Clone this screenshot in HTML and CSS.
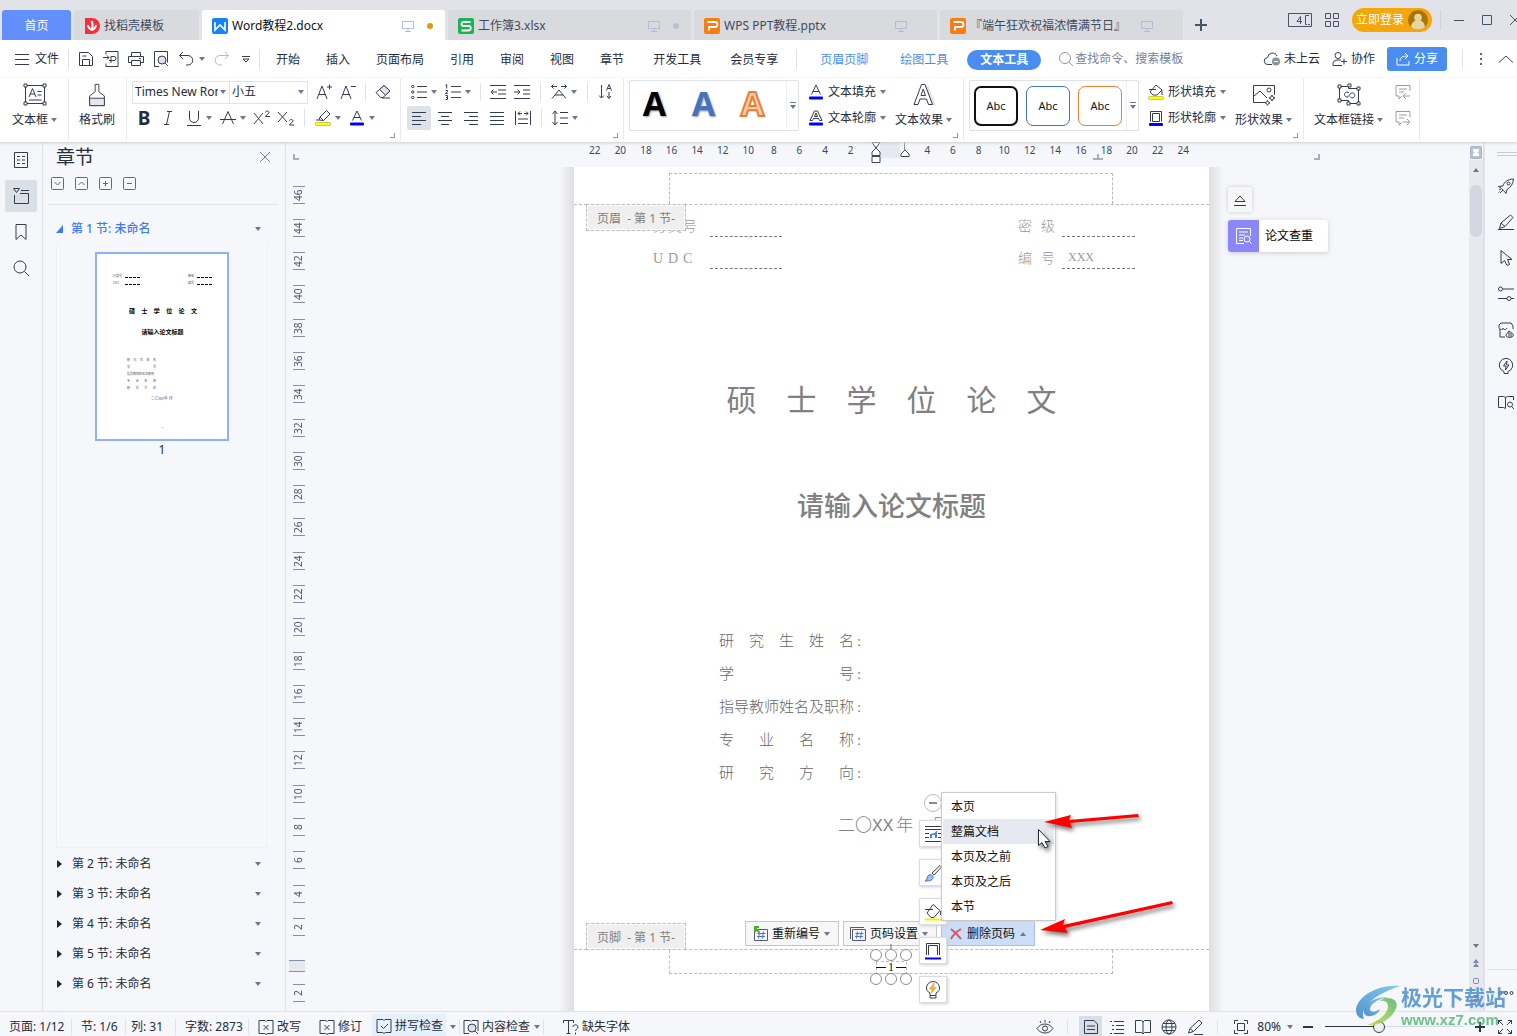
FILE: index.html
```html
<!DOCTYPE html>
<html lang="zh-CN">
<head>
<meta charset="utf-8">
<title>Word教程2.docx</title>
<link rel="stylesheet" href="styles.css">
</head>
<body>
<svg class="defs" aria-hidden="true">
  <defs>
    <symbol id="caret" viewBox="0 0 6 4"><path d="M0 0h6L3 4z" fill="#6b7890"/></symbol>
    <symbol id="screen" viewBox="0 0 12 12"><path d="M.5 1.500h11v7H.5zM6 9v2.500M3 11.500h6" fill="none" stroke="#b3bdd6"/></symbol>
    <symbol id="ppt" viewBox="0 0 16 16"><rect width="16" height="16" rx="2" fill="#f97c10"/><path d="M3.500 4h7.500a2 2 0 0 1 0 5H5v3.500" fill="none" stroke="#fff" stroke-width="1.800"/></symbol>
    <symbol id="save" viewBox="0 0 16 16"><path d="M1.500 1.500h9l4 4v9h-13zM4.500 14V8.500h7V14M4.500 5h4"/></symbol>
    <symbol id="export" viewBox="0 0 16 16"><path d="M3 3.500v-3h12v15H3v-3M0 6.500h6M4 4.500l2 2-2 2M8 12V5.500h3a2 2 0 0 1 0 4H6"/></symbol>
    <symbol id="print" viewBox="0 0 16 16"><path d="M3.500 5V1.500h9V5M3.500 11.500h-3v-6h15v6h-3M3.500 9.500h9v5h-9zM11 7.500h2"/></symbol>
    <symbol id="preview" viewBox="0 0 16 16"><path d="M6 15.500H1.500V.5h13v11M12 12l3 3"/><circle cx="9" cy="9" r="4" fill="#dde1e8"/></symbol>
    <symbol id="undo" viewBox="0 0 16 16"><path d="M5 1L1.500 4.500 5 8M2 4.500h8a4.500 4.500 0 0 1 0 9.500H8"/></symbol>
    <symbol id="textbox" viewBox="0 0 24 24"><path d="M2.500 2.500h19v18h-19zM6 14l3.500-8.500L13 14M7.200 11h4.800M14.500 8.500h4M14.500 12h4M6 17h12.500"/><path d="M1 1h3v3H1zM20 1h3v3h-3zM1 19h3v3H1zM20 19h3v3h-3z" fill="#fff"/></symbol>
    <symbol id="brush" viewBox="0 0 20 26"><path d="M8 1.500h4v8l6 4.500v10.500H2V14l6-4.500z"/><path d="M2 16.500h16v8H2z" fill="#e4e7ec"/></symbol>
    <symbol id="eraser" viewBox="0 0 16 16"><path d="M1 8.500L9 1.500l6 5.500-7 6.500H5.500zM7 14h8"/><path d="M9 1.500l6 5.500-4.500 4-6-5.500z" fill="#dfe3ea"/></symbol>
    <symbol id="bullets" viewBox="0 0 16 16"><path d="M6 2.500h10M6 8h10M6 13.500h10"/><circle cx="1.800" cy="2.500" r="1.200"/><circle cx="1.800" cy="8" r="1.200"/><circle cx="1.800" cy="13.500" r="1.200"/></symbol>
    <symbol id="numbers" viewBox="0 0 16 16"><path d="M6 2.500h10M6 8h10M6 13.500h10M.5 1.500l1.200-1V4.500M.5 6.500h2v1.300l-2 1.700h2.200M.5 11.500h2v4h-2M1 13.500h1.500"/></symbol>
    <symbol id="outdent" viewBox="0 0 16 16"><path d="M0 1.500h16M8 6h8M8 10h8M0 14.500h16M1 8h6M3.500 5.500L1 8l2.500 2.500"/></symbol>
    <symbol id="indent" viewBox="0 0 16 16"><path d="M0 1.500h16M9 6h7M9 10h7M0 14.500h16M0 8h6M3.500 5.500L6 8l-2.500 2.500"/></symbol>
    <symbol id="charscale" viewBox="0 0 16 16"><path d="M1 14.500L8 6l7 8.500M4 11h8M0 2.500h6M10 2.500h6M2.500.5l-2 2 2 2M13.500.5l2 2-2 2"/></symbol>
    <symbol id="sort" viewBox="0 0 16 16"><path d="M3.500 1v13M1 11.500l2.500 2.500L6 11.500M8.500 6.500l2.500-6 2.500 6M9.500 4.500h3M11 8v6M9 12l2 2.500 2-2.500"/></symbol>
    <symbol id="al" viewBox="0 0 14 14"><path d="M0 1.500h14M0 5.500h9M0 9.500h14M0 13.500h9"/></symbol>
    <symbol id="ac" viewBox="0 0 14 14"><path d="M0 1.500h14M3 5.500h8M0 9.500h14M3 13.500h8"/></symbol>
    <symbol id="ar" viewBox="0 0 14 14"><path d="M0 1.500h14M5 5.500h9M0 9.500h14M5 13.500h9"/></symbol>
    <symbol id="aj" viewBox="0 0 14 14"><path d="M0 1.500h14M0 5.500h14M0 9.500h14M0 13.500h14"/></symbol>
    <symbol id="ad" viewBox="0 0 16 16"><path d="M.5 1v14M15.500 1v14M3 3.500h4M9 3.500h4M5 1.500l-2 2 2 2M11 1.500l2 2-2 2M3 9h10M3 13.500h10"/></symbol>
    <symbol id="spacing" viewBox="0 0 16 16"><path d="M3 1v14M.5 4L3 1l2.500 3M.5 12L3 15l2.500-3M8 2.500h8M8 8h8M8 13.500h8"/></symbol>
    <symbol id="fillA" viewBox="0 0 14 16"><path d="M2.500 10.500L7 1l4.500 9.500M4 7.500h6"/><rect x="0" y="12.500" width="14" height="3" rx="1" fill="#00f" stroke="none"/></symbol>
    <symbol id="lineA" viewBox="0 0 14 16"><path d="M1 10.500L5.500 1h3L13 10.500h-2.500L9.500 8.500h-5l-1 2zM5.500 6.500h3L7 3z"/><rect x="0" y="12.500" width="14" height="3" rx="1" fill="#00f" stroke="none"/></symbol>
    <symbol id="bigA" viewBox="0 0 24 24"><path d="M15 3l7 18h-4" stroke="#e0e2e6" stroke-width="2.500"/><path d="M2 21.500L9.500 1.500h3.500l7.500 20h-4l-2-5.500H8l-2 5.500zM9 12.500h4.500L11.200 6z" fill="#fff"/></symbol>
    <symbol id="bucket" viewBox="0 0 16 16"><path d="M8 1l6 5-5 5H5L2 8zM1 5.500h7M14 6.500V11" fill="#fff"/><rect x=".5" y="12.500" width="15" height="3" rx="1" fill="#ff0" stroke="#a9a92c" stroke-width=".6"/></symbol>
    <symbol id="frame" viewBox="0 0 16 16"><path d="M2.500 11.500V1.500h11v10M4.500 11.500v-8h7v8z"/><rect x="1" y="13" width="14" height="3" rx="1" fill="#00f" stroke="none"/></symbol>
    <symbol id="effect" viewBox="0 0 24 24"><path d="M13 19.500H1.500v-17h21V12M2 13l6-5 7 7"/><circle cx="17" cy="7" r="2"/><path d="M20 12l1 2 2 1-2 1-1 2-1-2-2-1 2-1zM15.500 17.500l.8 1.500 1.700.8-1.700.9-.8 1.500-.8-1.500-1.700-.9 1.700-.8z"/></symbol>
    <symbol id="link" viewBox="0 0 24 24"><path d="M2.500 3.500h10v-1h-1v3h10v15h-10v-3h-9zM12 10l-1-.8a2.500 2.500 0 1 0 0 4.600l2-2.600a2.500 2.500 0 1 1 0 2.300"/><path d="M1 2h3v3H1zM11 1h3v3h-3zM20 4h3v3h-3zM1 16h3v3H1zM10 19h3v3h-3zM20 19h3v3h-3z" fill="#fff"/></symbol>
    <symbol id="note" viewBox="0 0 16 16"><path d="M15 7V1.500H1V12h3v3l3-3M4 5h8M4 8h5M8 12h7M11 9l-3 3 3 3"/></symbol>
    <symbol id="bookx" viewBox="0 0 16 16"><path d="M8 2.500l-1-1H1v13h5.500l1.500 1 1.500-1H15v-13H9zM5.500 6l5 5M10.500 6l-5 5"/></symbol>
    <symbol id="bookv" viewBox="0 0 16 16"><path d="M8 2.500l-1-1H1v13h5.500l1.500 1 1.500-1H15v-13H9zM5 8l2.500 2.500L12 6"/></symbol>
    <symbol id="hash" viewBox="0 0 14 14"><path d="M.5 2.500h13v11H.5z" stroke="#555b68"/><path d="M5.500 4.500l-1 7M9.500 4.500l-1 7M3.500 6.500h8M3 9.500h8" stroke="#3f78e0"/></symbol>
  </defs>
</svg>

<header class="titlebar">
  <nav class="tabs">
    <a class="tab home" href="#">首页</a>
    <a class="tab store" href="#"><svg class="i16" viewBox="0 0 16 16"><path d="M1 0h7a8 8 0 0 1 0 16H1z" fill="#f5303c"/><path d="M7.500 3c2 3 1 6 .5 9M4 7c0 3 2 4 4 5M12 7c0 3-2 4-4 5" stroke="#fff" stroke-width="2" fill="none"/></svg>找稻壳模板</a>
    <a class="tab active" href="#"><svg class="i16" viewBox="0 0 16 16"><rect width="16" height="16" rx="2" fill="#1483f7"/><path d="M3 4v8l5-5 5 5V4" fill="none" stroke="#fff" stroke-width="1.600"/></svg><span>Word教程2.docx</span><svg class="i12"><use href="#screen"/></svg><i class="dot"></i></a>
    <a class="tab" href="#"><svg class="i16" viewBox="0 0 16 16"><rect width="16" height="16" rx="2" fill="#1bb455"/><path d="M12.500 4H5.500a2 2 0 0 0 0 4h5a2 2 0 0 1 0 4.500h-7" fill="none" stroke="#fff" stroke-width="1.800"/></svg><span>工作簿3.xlsx</span><svg class="i12"><use href="#screen"/></svg><i class="dot pale"></i></a>
    <a class="tab" href="#"><svg class="i16"><use href="#ppt"/></svg><span>WPS PPT教程.pptx</span><svg class="i12 last"><use href="#screen"/></svg></a>
    <a class="tab" href="#"><svg class="i16"><use href="#ppt"/></svg><span>『端午狂欢祝福浓情满节日』</span><svg class="i12 last"><use href="#screen"/></svg></a>
    <button class="plus" aria-label="新建"><svg class="i12" viewBox="0 0 12 12"><path d="M6 0v12M0 6h12" stroke="#46536b" stroke-width="2"/></svg></button>
  </nav>
  <div class="win">
    <button aria-label="窗口"><svg width="24" height="14" viewBox="0 0 24 14" class="ln"><path d="M.5.500h23v13H.5zM21 2.500h-3.500v9H19M20 11.500h2M12.500 11V3.500L9 8.500h5"/></svg></button>
    <button aria-label="应用"><svg width="14" height="14" viewBox="0 0 14 14" class="ln"><path d="M.5.500h5v5h-5zM8.500.500h5v5h-5zM.5 8.500h5v5h-5zM8.500 8.500h5v5h-5z"/></svg></button>
    <button class="login">立即登录<svg width="20" height="20" viewBox="0 0 20 20"><circle cx="10" cy="10" r="10" fill="#a87408"/><circle cx="10" cy="7.500" r="3.800" fill="#e8d3a4"/><path d="M3 17a7 7 0 0 1 14 0 10 10 0 0 1-14 0z" fill="#e8d3a4"/></svg></button>
    <i class="vsep"></i>
    <button aria-label="最小化"><svg width="10" height="10" viewBox="0 0 10 10" class="ln"><path d="M0 5.500h10"/></svg></button>
    <button aria-label="最大化"><svg width="10" height="10" viewBox="0 0 10 10" class="ln"><path d="M.5.500h9v9h-9z"/></svg></button>
    <button aria-label="关闭"><svg width="10" height="10" viewBox="0 0 10 10" class="ln"><path d="M0 0l10 10M10 0L0 10"/></svg></button>
  </div>
</header>

<div class="menubar">
  <button class="file"><svg width="14" height="12" viewBox="0 0 14 12" class="ln"><path d="M0 1.500h14M0 6.500h14M0 11.500h14"/></svg>文件</button>
  <i class="vsep"></i>
  <div class="quick">
    <button aria-label="保存"><svg class="i16 ln"><use href="#save"/></svg></button>
    <button aria-label="输出为PDF"><svg class="i16 ln"><use href="#export"/></svg></button>
    <button aria-label="打印"><svg class="i16 ln"><use href="#print"/></svg></button>
    <button aria-label="打印预览"><svg class="i16 ln"><use href="#preview"/></svg></button>
    <button aria-label="撤销"><svg class="i16 ln"><use href="#undo"/></svg><svg class="caret"><use href="#caret"/></svg></button>
    <button aria-label="恢复" class="redo"><svg class="i16 ln"><use href="#undo"/></svg></button>
    <button aria-label="自定义"><svg width="8" height="8" viewBox="0 0 8 8" class="ln"><path d="M0 1.500h8M1 4l3 3 3-3z"/></svg></button>
  </div>
  <i class="vsep"></i>
  <nav class="menus">
    <a href="#">开始</a><a href="#">插入</a><a href="#">页面布局</a><a href="#">引用</a><a href="#">审阅</a><a href="#">视图</a><a href="#">章节</a><a href="#" class="far">开发工具</a><a href="#" class="far">会员专享</a>
  </nav>
  <i class="vsep"></i>
  <nav class="menus ctx">
    <a href="#">页眉页脚</a><a href="#">绘图工具</a><a href="#" class="pill">文本工具</a>
  </nav>
  <label class="search"><svg width="14" height="14" viewBox="0 0 14 14"><circle cx="6" cy="6" r="5.500"/><path d="M10 10l4 4"/></svg><input type="text" placeholder="查找命令、搜索模板" aria-label="查找命令"></label>
  <div class="cloud">
    <button><svg class="i16 ln" viewBox="0 0 16 16"><path d="M8 13.500H4a3.500 3.500 0 0 1-.5-7A5 5 0 0 1 13 5"/><circle cx="12" cy="10.500" r="4" fill="#8b93a3" stroke="none"/><path d="M10 10.500h4" stroke="#fff"/></svg>未上云</button>
    <button><svg width="15" height="14" viewBox="0 0 15 14" class="ln"><circle cx="6" cy="3.500" r="3"/><path d="M10 13.500H1V11a4 4 0 0 1 4-3h4M9 9.500h6M12 6.500v6"/></svg>协作</button>
    <button class="share"><svg width="14" height="14" viewBox="0 0 14 14"><path d="M1 6v7h12V9M4 9c0-4 3-5 8-5M9 1l3 3-3 3"/></svg>分享</button>
    <i class="vsep"></i>
    <button aria-label="更多"><svg width="4" height="14" viewBox="0 0 4 14"><path d="M1 1h2v2H1zM1 6h2v2H1zM1 11h2v2H1z" fill="#5b6679"/></svg></button>
    <button aria-label="收起功能区"><svg width="14" height="8" viewBox="0 0 14 8" class="ln"><path d="M0 7.500L7 1l7 6.500"/></svg></button>
  </div>
</div>

<div class="ribbon">
  <section class="grp g-box">
    <button class="big"><svg class="i24 ln"><use href="#textbox"/></svg><span>文本框<svg class="caret"><use href="#caret"/></svg></span></button>
  </section>
  <section class="grp g-brush">
    <button class="big"><svg width="20" height="26" class="ln"><use href="#brush"/></svg><span>格式刷</span></button>
  </section>
  <section class="grp rows">
    <div class="row">
      <span class="combo face"><select aria-label="字体"><option>Times New Roman</option></select><svg class="caret"><use href="#caret"/></svg></span>
      <span class="combo size"><select aria-label="字号"><option>小五</option></select><svg class="caret"><use href="#caret"/></svg></span>
      <button class="tb first" aria-label="增大字号"><svg class="i16 ln" viewBox="0 0 16 16"><path d="M1 15L6 2l5 13M3 10.500h6.500M11 3h5M13.500.500v5"/></svg></button>
      <button class="tb" aria-label="减小字号"><svg class="i16 ln" viewBox="0 0 16 16"><path d="M1 15L6 2l5 13M3 10.500h6.500M11 2.500h5"/></svg></button>
      <i class="sep"></i>
      <button class="tb" aria-label="清除格式"><svg class="i16 ln"><use href="#eraser"/></svg></button>
    </div>
    <div class="row format">
      <button class="tb bold" aria-label="加粗">B</button>
      <button class="tb italic" aria-label="倾斜"><svg class="i16 ln" viewBox="0 0 16 16"><path d="M7 1.500h5M4 14.500h5M9.500 1.500l-3 13"/></svg></button>
      <button class="tb c" aria-label="下划线"><svg class="i16 ln" viewBox="0 0 16 16"><path d="M3.500 1v7a4.500 4.500 0 0 0 9 0V1M1 15.500h14"/></svg><svg class="caret"><use href="#caret"/></svg></button>
      <button class="tb c" aria-label="删除线"><svg class="i16 ln" viewBox="0 0 16 16"><path d="M2.500 14L8 1.500 13.500 14M0 9.500h16"/></svg><svg class="caret"><use href="#caret"/></svg></button>
      <button class="tb" aria-label="上标"><svg class="i16 ln" viewBox="0 0 16 16"><path d="M0 3l9 11M9 3L0 14M11.500 2.500c0-2 3.500-2 3.500 0 0 1.500-3.500 2.500-3.500 4H16"/></svg></button>
      <button class="tb" aria-label="下标"><svg class="i16 ln" viewBox="0 0 16 16"><path d="M0 2l9 10M9 2L0 12M11.500 11c0-2 3.500-2 3.500 0 0 1.500-3.500 2.500-3.500 4H16"/></svg></button>
      <i class="sep"></i>
      <button class="tb c" aria-label="突出显示"><svg class="i16 ln" viewBox="0 0 16 16"><path d="M4 10l1-3 6.500-6.500L15 4 8.500 10.500zM5 7l3.500 3.500M4 10H1"/><rect x=".5" y="12.500" width="15" height="3" rx="1" fill="#ff0" stroke="#a9a92c" stroke-width=".6"/></svg><svg class="caret"><use href="#caret"/></svg></button>
      <button class="tb c" aria-label="字体颜色"><svg class="i16 ln"><use href="#fillA"/></svg><svg class="caret"><use href="#caret"/></svg></button>
    </div>
    <i class="corner"></i>
  </section>
  <section class="grp rows paragraph">
    <div class="row para">
      <button class="tb c" aria-label="项目符号"><svg class="i16 ln"><use href="#bullets"/></svg><svg class="caret"><use href="#caret"/></svg></button>
      <button class="tb c" aria-label="编号"><svg class="i16 ln"><use href="#numbers"/></svg><svg class="caret"><use href="#caret"/></svg></button>
      <i class="sep"></i>
      <button class="tb" aria-label="减少缩进"><svg class="i16 ln"><use href="#outdent"/></svg></button>
      <button class="tb" aria-label="增加缩进"><svg class="i16 ln"><use href="#indent"/></svg></button>
      <i class="sep"></i>
      <button class="tb c" aria-label="中文版式"><svg class="i16 ln"><use href="#charscale"/></svg><svg class="caret"><use href="#caret"/></svg></button>
      <i class="sep"></i>
      <button class="tb" aria-label="排序"><svg class="i16 ln"><use href="#sort"/></svg></button>
    </div>
    <div class="row align">
      <button class="tb on" aria-label="左对齐"><svg class="i14 ln"><use href="#al"/></svg></button>
      <button class="tb" aria-label="居中"><svg class="i14 ln"><use href="#ac"/></svg></button>
      <button class="tb" aria-label="右对齐"><svg class="i14 ln"><use href="#ar"/></svg></button>
      <button class="tb" aria-label="两端对齐"><svg class="i14 ln"><use href="#aj"/></svg></button>
      <button class="tb" aria-label="分散对齐"><svg class="i16 ln"><use href="#ad"/></svg></button>
      <i class="sep"></i>
      <button class="tb c" aria-label="行距"><svg class="i16 ln"><use href="#spacing"/></svg><svg class="caret"><use href="#caret"/></svg></button>
    </div>
    <i class="corner"></i>
  </section>
  <section class="grp g-art">
    <div class="gallery">
      <button class="art black">A</button><button class="art blue">A</button><button class="art orange">A</button>
      <button class="more" aria-label="更多样式"><svg width="6" height="8" viewBox="0 0 6 8"><path d="M0 .5h6" stroke="#6b7890"/><path d="M0 3h6L3 7z" fill="#6b7890"/></svg></button>
    </div>
    <div class="stack">
      <button><svg class="i16 ln"><use href="#fillA"/></svg>文本填充<svg class="caret"><use href="#caret"/></svg></button>
      <button><svg class="i16 ln"><use href="#lineA"/></svg>文本轮廓<svg class="caret"><use href="#caret"/></svg></button>
    </div>
    <button class="big"><svg class="i24 ln"><use href="#bigA"/></svg><span>文本效果<svg class="caret"><use href="#caret"/></svg></span></button>
    <i class="corner"></i>
  </section>
  <section class="grp g-art">
    <div class="gallery">
      <button class="abc black">Abc</button><button class="abc blue">Abc</button><button class="abc orange">Abc</button>
      <button class="more" aria-label="更多样式"><svg width="6" height="8" viewBox="0 0 6 8"><path d="M0 .5h6" stroke="#6b7890"/><path d="M0 3h6L3 7z" fill="#6b7890"/></svg></button>
    </div>
    <div class="stack">
      <button><svg class="i16 ln"><use href="#bucket"/></svg>形状填充<svg class="caret"><use href="#caret"/></svg></button>
      <button><svg class="i16 ln"><use href="#frame"/></svg>形状轮廓<svg class="caret"><use href="#caret"/></svg></button>
    </div>
    <button class="big"><svg class="i24 ln"><use href="#effect"/></svg><span>形状效果<svg class="caret"><use href="#caret"/></svg></span></button>
    <i class="corner"></i>
  </section>
  <section class="grp g-link">
    <button class="big"><svg class="i24 ln"><use href="#link"/></svg><span>文本框链接<svg class="caret"><use href="#caret"/></svg></span></button>
    <div class="stack dim">
      <button aria-label="前一文本框"><svg class="i16 ln"><use href="#note"/></svg></button>
      <button aria-label="下一文本框"><svg class="i16 ln" viewBox="0 0 16 16"><path d="M15 7V1.500H1V12h3v3l3-3M4 5h8M4 8h5M8 12h7M12 9l3 3-3 3"/></svg></button>
    </div>
  </section>
</div>

<main class="work">
  <nav class="rail">
    <button aria-label="目录"><svg class="i16 ln" viewBox="0 0 16 16"><path d="M1.500.500h13v15h-13zM4 4.500h3M9 4.500h3M4 8h3M9 8h3M4 11.500h3M9 11.500h3"/></svg></button>
    <button class="on" aria-label="章节"><svg class="i16 ln" viewBox="0 0 16 16"><path d="M1.500 7v8.500h14v-10H7M8 2.500h8M.5.500h6l-3 4z"/></svg></button>
    <button aria-label="书签"><svg class="i16 ln" viewBox="0 0 16 16"><path d="M3 .5h10v15l-5-4.500-5 4.500z"/></svg></button>
    <button aria-label="查找"><svg class="i16 ln" viewBox="0 0 16 16"><circle cx="7" cy="7" r="6"/><path d="M11.500 11.500L16 16"/></svg></button>
  </nav>

  <aside class="panel">
    <div class="phead"><h1>章节</h1><button aria-label="关闭"><svg width="10" height="10" viewBox="0 0 10 10" class="ln"><path d="M0 0l10 10M10 0L0 10"/></svg></button></div>
    <div class="ptools">
      <button aria-label="展开"><svg width="13" height="13" viewBox="0 0 13 13"><rect x=".5" y=".5" width="12" height="12" rx="1"/><path d="M3.500 5l3 3 3-3"/></svg></button>
      <button aria-label="收起"><svg width="13" height="13" viewBox="0 0 13 13"><rect x=".5" y=".5" width="12" height="12" rx="1"/><path d="M3.500 8l3-3 3 3"/></svg></button>
      <button aria-label="新增"><svg width="13" height="13" viewBox="0 0 13 13"><rect x=".5" y=".5" width="12" height="12" rx="1"/><path d="M4 6.500h5M6.500 4v5"/></svg></button>
      <button aria-label="删除"><svg width="13" height="13" viewBox="0 0 13 13"><rect x=".5" y=".5" width="12" height="12" rx="1"/><path d="M4 6.500h5"/></svg></button>
    </div>
    <button class="sec open"><svg width="7" height="8" viewBox="0 0 7 8"><path d="M7 0v8H0z" fill="#3f7bf5"/></svg><span>第 1 节: 未命名</span><svg class="caret"><use href="#caret"/></svg></button>
    <div class="thumbs">
      <div class="thumb">
        <div class="tm"><span>分类号</span><i></i><b></b><span>密级</span><i></i></div>
        <div class="tm"><span>UDC</span><i></i><b></b><span>编号</span><i></i></div>
        <p class="t1"><span>硕</span><span>士</span><span>学</span><span>位</span><span>论</span><span>文</span></p>
        <p class="t2">请输入论文标题</p>
        <div class="t3">
          <p><span>研</span><span>究</span><span>生</span><span>姓</span><span>名</span></p>
          <p><span>学</span><span>号</span></p>
          <p><span>指导教师姓名及职称</span></p>
          <p><span>专</span><span>业</span><span>名</span><span>称</span></p>
          <p><span>研</span><span>究</span><span>方</span><span>向</span></p>
        </div>
        <p class="t4">二〇XX年 月</p>
        <p class="t5">—</p>
      </div>
      <span class="tnum">1</span>
    </div>
    <button class="sec"><svg width="5" height="8" viewBox="0 0 5 8"><path d="M0 0l5 4-5 4z" fill="#1d2433"/></svg><span>第 2 节: 未命名</span><svg class="caret"><use href="#caret"/></svg></button>
    <button class="sec"><svg width="5" height="8" viewBox="0 0 5 8"><path d="M0 0l5 4-5 4z" fill="#1d2433"/></svg><span>第 3 节: 未命名</span><svg class="caret"><use href="#caret"/></svg></button>
    <button class="sec"><svg width="5" height="8" viewBox="0 0 5 8"><path d="M0 0l5 4-5 4z" fill="#1d2433"/></svg><span>第 4 节: 未命名</span><svg class="caret"><use href="#caret"/></svg></button>
    <button class="sec"><svg width="5" height="8" viewBox="0 0 5 8"><path d="M0 0l5 4-5 4z" fill="#1d2433"/></svg><span>第 5 节: 未命名</span><svg class="caret"><use href="#caret"/></svg></button>
    <button class="sec"><svg width="5" height="8" viewBox="0 0 5 8"><path d="M0 0l5 4-5 4z" fill="#1d2433"/></svg><span>第 6 节: 未命名</span><svg class="caret"><use href="#caret"/></svg></button>
  </aside>

  <div class="vruler">
    <svg class="tabkind" width="6" height="6" viewBox="0 0 6 6"><path d="M1 0v5h5" fill="none" stroke="#a9afbd" stroke-width="2"/></svg>
    <div><span>46</span></div><div><span>44</span></div><div><span>42</span></div><div><span>40</span></div><div><span>38</span></div><div><span>36</span></div><div><span>34</span></div><div><span>32</span></div><div><span>30</span></div><div><span>28</span></div><div><span>26</span></div><div><span>24</span></div><div><span>22</span></div><div><span>20</span></div><div><span>18</span></div><div><span>16</span></div><div><span>14</span></div><div><span>12</span></div><div><span>10</span></div><div><span>8</span></div><div><span>6</span></div><div><span>4</span></div><div><span>2</span></div><div class="zero"><i></i></div><div><span>2</span></div>
  </div>

  <div class="canvas">
    <div class="hruler">
      <span>22</span><span>20</span><span>18</span><span>16</span><span>14</span><span>12</span><span>10</span><span>8</span><span>6</span><span>4</span><span>2</span>
      <span class="mark"><svg width="42" height="22" viewBox="0 0 42 22"><path d="M9 0h20v16H9z" fill="#e6e9f0"/><path d="M33.500 0v8" stroke="#8290ab"/><path d="M1 .5h8L5 6zM1 13.500V10l4-4 4 4v3.500zM1 14.500h8v6H1zM30 14.500V12l4-4 4 4v2.500h-8z" fill="#fff" stroke="#3d475e"/></svg></span>
      <span></span>
      <span>4</span><span>6</span><span>8</span><span>10</span><span>12</span><span>14</span><span>16</span><span>18</span><span>20</span><span>22</span><span>24</span>
    </div>
    <div class="tabstops"><svg width="10" height="6" viewBox="0 0 10 6"><path d="M5 0v5M0 5h10" fill="none" stroke="#a9afbd" stroke-width="2"/></svg><svg width="6" height="6" viewBox="0 0 6 6"><path d="M5 0v5H0" fill="none" stroke="#a9afbd" stroke-width="2"/></svg></div>
    <div class="gutter left"></div>
    <article class="page">
      <div class="pheader"><div class="hbox"></div><span class="tag">页眉&nbsp; - 第 1 节-</span></div>
      <div class="pbody">
        <div class="meta"><span class="k"><b>分</b><b>类</b><b>号</b></span><u></u><span class="k two"><b>密</b><b>级</b></span><u></u></div>
        <div class="meta"><span class="k"><b>U</b><b>D</b><b>C</b></span><u></u><span class="k two"><b>编</b><b>号</b></span><u>XXX</u></div>
        <h2><span>硕</span><span>士</span><span>学</span><span>位</span><span>论</span><span>文</span></h2>
        <h3>请输入论文标题</h3>
        <dl>
          <dt><span>研</span><span>究</span><span>生</span><span>姓</span><span>名</span></dt><dd>:</dd>
          <dt><span>学</span><span>号</span></dt><dd>:</dd>
          <dt><span>指导教师姓名及职称</span></dt><dd>:</dd>
          <dt><span>专</span><span>业</span><span>名</span><span>称</span></dt><dd>:</dd>
          <dt><span>研</span><span>究</span><span>方</span><span>向</span></dt><dd>:</dd>
        </dl>
        <p class="date"><span>二〇</span><small>XX</small><span>年</span><span>月</span></p>
      </div>
      <div class="pfooter">
        <span class="tag">页脚&nbsp; - 第 1 节-</span>
        <div class="fbox"></div>
        <div class="fbar">
          <button><svg width="14" height="14" class="g"><use href="#hash"/><path d="M0 0h5M1 0v5M1 1l4 4" stroke="#43b02a" stroke-width="2"/></svg>重新编号<svg class="caret"><use href="#caret"/></svg></button>
          <button><svg width="14" height="14" class="g"><use href="#hash"/><path d="M-1.500 12V.5H12" stroke="#555b68"/></svg>页码设置<svg class="caret"><use href="#caret"/></svg></button>
          <button class="del"><svg width="12" height="12" viewBox="0 0 12 12"><path d="M1 1c4 3 7 6 10 10M11 1C6 4 3 7 1 11" stroke="#d9545c" stroke-width="2" fill="none"/></svg>删除页码<svg class="caret up"><use href="#caret"/></svg></button>
        </div>
        <div class="pnum">
          <svg width="44" height="46" viewBox="0 0 44 46"><path d="M22 0v5" stroke="#666"/><path d="M7 17.500h30M7 29.500h30M7.500 18v11M37.500 18v11" stroke="#bbb" stroke-dasharray="3 2"/><g fill="#fff" stroke="#8c8c8c"><circle cx="7" cy="11" r="5.500"/><circle cx="22" cy="11" r="5.500"/><circle cx="37" cy="11" r="5.500"/><circle cx="7" cy="35" r="5.500"/><circle cx="22" cy="35" r="5.500"/><circle cx="37" cy="35" r="5.500"/></g><path d="M7 23.500h10M27 23.500h10" stroke="#111"/></svg>
          <span>1</span>
        </div>
        <div class="float">
          <button class="min" aria-label="收起"></button>
          <button aria-label="布局选项"><svg width="18" height="18" viewBox="0 0 18 18"><path d="M1 1.500h16M1 4.500h16M1 8.500h4M14 8.500h3M1 12.500h4M14 12.500h3M1 16.500h16" stroke="#333a48"/><path d="M6 13V9l5-1 1-2h1v7h-2v-3H8v3z" fill="#4a7fe0"/></svg></button>
          <button aria-label="样式"><svg width="18" height="18" viewBox="0 0 18 18"><path d="M8 9l8-7.500 1.500 1.500L10 11z" fill="#fff" stroke="#333a48"/><path d="M1 17c3-1 1-4 4-6 2-1 5 1 4 3-1 3-5 3-8 3z" fill="#9cbdf5" stroke="#3f71c8"/></svg></button>
          <button aria-label="填充"><svg width="18" height="18" viewBox="0 0 18 18"><path d="M9 1.500l7 6-6 7H7L3 10zM1 6.500h8M16.500 8v4" fill="#fff" stroke="#333a48"/><path d="M1 16.500h16" stroke="#f5ee00" stroke-width="2"/></svg></button>
          <button aria-label="轮廓"><svg width="18" height="18" viewBox="0 0 18 18"><path d="M2.500 13V1.500h13V13M4.500 13V3.500h9V13" fill="none" stroke="#333a48"/><path d="M1 16.500h16" stroke="#00f" stroke-width="2"/></svg></button>
          <button aria-label="智能建议"><svg width="18" height="18" viewBox="0 0 18 18"><path d="M6 14v-2C3 10.500 2.500 8.500 2.500 7a6.500 6.500 0 0 1 13 0c0 1.500-.5 3.500-3.500 5v2M6 14.500h6v2.500H6z" fill="#fff" stroke="#333a48"/><path d="M10 2L5.500 8H8l-.5 4L12 6.500H9.500z" fill="#f6b81c" stroke="#d18b00" stroke-width=".5"/></svg></button>
        </div>
        <div class="menu">
          <button>本页</button><button class="hover">整篇文档</button><button>本页及之前</button><button>本页及之后</button><button>本节</button>
        </div>
        <svg class="arrows" width="142" height="130" viewBox="0 0 142 130">
          <g fill="#f00"><path d="M8 12l27-7-2 5 69-6 1 3-69 6 2 5z"/><path d="M4 120l25-11-2 6 109-24 1 3-108 24 3 5z"/></g>
          <path d="M2.500 19.500v16l3.500-3 3 5.500 3-1.500-3-5h5z" fill="#fff" stroke="#222a38"/>
        </svg>
      </div>
    </article>
    <div class="gutter right">
      <button class="eject" aria-label="折叠"><svg width="12" height="12" viewBox="0 0 12 12" class="ln"><path d="M1 7.500L6 2l5 5.500zM0 11.500h12"/></svg></button>
      <button class="check"><span><svg class="i16" viewBox="0 0 16 16"><path d="M8 15.500H.5V.500h14V8M3 4h9M3 7h6M3 10h4M3 12.500h4M13.500 13.500l2 2" /><circle cx="11" cy="11" r="3"/></svg></span>论文查重</button>
    </div>
  </div>

  <div class="scroll">
    <svg width="12" height="14" viewBox="0 0 12 14"><rect x=".5" y=".5" width="11" height="12" rx="1" fill="#b9c2d4" stroke="#a7b1c6"/><path d="M3 3h6v2L7 7h2v3H3V7h2L3 5z" fill="#fff"/></svg>
    <div class="track">
      <svg class="caret up"><use href="#caret"/></svg>
      <i class="thumbbar"></i>
      <b></b>
      <svg class="caret"><use href="#caret"/></svg>
      <svg width="6" height="8" viewBox="0 0 6 8"><path d="M0 4l3-4 3 4zM0 8l3-4 3 4z" fill="#7d89a3"/></svg>
      <svg width="6" height="6" viewBox="0 0 6 6"><rect x=".5" y=".5" width="5" height="5" rx="1" fill="none" stroke="#7d89a3"/></svg>
      <svg width="6" height="8" viewBox="0 0 6 8"><path d="M0 0h6L3 4zM0 4h6L3 8z" fill="#7d89a3"/></svg>
    </div>
  </div>

  <nav class="rrail">
    <i class="grip"></i>
    <button aria-label="快捷"><svg class="i16 ln" viewBox="0 0 16 16"><path d="M5 8c1-4 5-7 10.500-7C15 6 13 9 9 11.500l-1 4-2.500-3L3.500 10.500.5 8.500zM1 12l2-1M2 15l3-3M.5 14.500l1-1"/><circle cx="10.500" cy="5.500" r="1.500"/></svg></button>
    <button aria-label="编辑"><svg class="i16 ln" viewBox="0 0 16 16"><path d="M1.500 14.500L3 9l9.500-8 2.500 2.500-8 9zM3 9l4 3.500M0 15.500h16"/></svg></button>
    <button aria-label="选择"><svg class="i16 ln" viewBox="0 0 16 16"><path d="M3 .5v13l3.500-3 2.500 5 2.500-1-2-5h4.500z"/></svg></button>
    <button aria-label="设置"><svg class="i16 ln" viewBox="0 0 16 16"><circle cx="2.500" cy="3" r="2"/><path d="M5 3h11M0 12.500h9M13 12.500h3"/><circle cx="11" cy="12.500" r="2"/></svg></button>
    <button aria-label="素材"><svg class="i16 ln" viewBox="0 0 16 16"><path d="M2 7v8h5M1 6V3l2-2h10l2 3v3M1 6c1 2 4 2 4 0 0 2 3 2 4 0"/><path d="M8 14c0-3 2-3 3-5 2 2 5 2 4 5-1 2-6 2-7 0zM11 9v6M13 11v4"/></svg></button>
    <button aria-label="推荐"><svg class="i16 ln" viewBox="0 0 16 16"><path d="M6 13.500A6.700 6.700 0 1 1 10 13.500v2H6zM9 3L5.500 8H8l-.5 4L11 7H8.500z"/></svg></button>
    <button aria-label="阅读"><svg class="i16 ln" viewBox="0 0 16 16"><path d="M7.500 14.500l-2-1H.5v-11h5l2 1 2-1h6V6M7.500 3.500v11M14 13l2 2"/><circle cx="12" cy="10.500" r="2.500"/></svg></button>
    <b></b>
    <button class="dots" aria-label="更多"><svg width="16" height="6" viewBox="0 0 16 6" class="ln"><circle cx="2.500" cy="3" r="1.500"/><circle cx="8" cy="3" r="1.500"/><circle cx="13.500" cy="3" r="1.500"/></svg></button>
  </nav>
</main>

<footer class="status">
  <span class="s1">页面: 1/12</span><span class="s2">节: 1/6</span><span class="s3">列: 31</span><span class="s4">字数: 2873</span>
  <button class="st"><svg class="i16 ln"><use href="#bookx"/></svg>改写</button>
  <button class="st"><svg class="i16 ln"><use href="#bookx"/></svg>修订</button>
  <button class="st lit"><svg class="i16 ln"><use href="#bookv"/></svg>拼写检查</button><svg class="caret"><use href="#caret"/></svg>
  <i class="vsep"></i>
  <button class="st tight"><svg class="i16 ln" viewBox="0 0 16 16"><path d="M6 14.500H1v-13h6l1 1 1-1h6V12M12 12l3 3"/><circle cx="9" cy="9" r="4" fill="#dde1e8"/></svg>内容检查</button><svg class="caret"><use href="#caret"/></svg>
  <i class="vsep"></i>
  <button class="st font"><svg class="i16 ln" viewBox="0 0 16 16"><path d="M.5 4V1.500h10V4M5.500 1.500v13M3.500 14.500h4M10 8c0-3 5-3 5 0 0 2-2.500 2-2.500 4M12.500 13.500v2"/></svg>缺失字体</button>
  <div class="views">
    <button class="vb" aria-label="护眼"><svg class="i16 ln" viewBox="0 0 16 16"><path d="M0 9.500c4-6 12-6 16 0-4 6-12 6-16 0zM8 1v2.500M3 2l1 2M13 2l-1 2"/><circle cx="8" cy="9.500" r="2.500"/></svg></button>
    <i class="vsep"></i>
    <button class="vb on" aria-label="页面视图"><svg class="i14 ln" viewBox="0 0 14 14"><path d="M.5.500H10l3.500 3.500v9.500H.5zM3 6h8M3 9.500h8"/></svg></button>
    <button class="vb" aria-label="大纲"><svg class="i14 ln" viewBox="0 0 14 14"><path d="M0 1.500h2M4 1.500h10M2 5.500h2M6 5.500h8M2 9.500h2M6 9.500h8M0 13.500h2M4 13.500h10"/></svg></button>
    <button class="vb" aria-label="阅读版式"><svg class="i16 ln" viewBox="0 0 16 16"><path d="M8 3L6.500 1.500h-6v12h6L8 15l1.500-1.500h6v-12h-6zM8 3v11"/></svg></button>
    <button class="vb" aria-label="Web版式"><svg class="i16 ln" viewBox="0 0 16 16"><circle cx="8" cy="8" r="7"/><ellipse cx="8" cy="8" rx="3" ry="7"/><path d="M1 8h14M2 4.500h12M2 11.500h12"/></svg></button>
    <button class="vb" aria-label="写作模式"><svg class="i16 ln" viewBox="0 0 16 16"><path d="M1.500 14L3 9.500 12 1l3 3-8.500 8.500zM3 9.500l3.500 3M7 15.500h9"/></svg></button>
    <i class="vsep"></i>
    <button class="vb" aria-label="适合窗口"><svg class="i14 ln" viewBox="0 0 14 14"><path d="M.5 4V.500H4M10 .5h3.500V4M13.500 10v3.500H10M4 13.500H.5V10M3.500 3.500h7v7h-7z"/></svg></button>
    <button class="pct">80%<svg class="caret"><use href="#caret"/></svg></button>
    <button class="zb" aria-label="缩小"><svg class="i12" viewBox="0 0 12 12"><path d="M1 6h10" stroke="#2b3448" stroke-width="2"/></svg></button>
    <input type="range" min="0" max="100" value="38" aria-label="缩放">
    <button class="zb" aria-label="放大"><svg class="i12" viewBox="0 0 12 12"><path d="M1 6h10M6 1v10" stroke="#2b3448" stroke-width="2"/></svg></button>
    <button class="vb" aria-label="全屏"><svg class="i14 ln" viewBox="0 0 14 14"><path d="M.5 4V.500H4M.5.500L5 5M10 .5h3.500V4M13.500.500L9 5M13.500 10v3.500H10M13.500 13.500L9 9M4 13.500H.5V10M.5 13.500L5 9"/></svg></button>
  </div>
</footer>

<div class="brand">
  <svg width="46" height="42" viewBox="0 0 46 42">
    <defs><linearGradient id="bl" x1="0" y1="1" x2="1" y2="0"><stop offset="0" stop-color="#3b82c8"/><stop offset="1" stop-color="#6cc4ea"/></linearGradient><linearGradient id="gr" x1="0" y1="1" x2="1" y2="0"><stop offset="0" stop-color="#d2dc4a"/><stop offset="1" stop-color="#4fb565"/></linearGradient></defs>
    <path d="M45 1C22-1 2 12 1 25c0 7 5 9 8 9-4-9 4-22 36-33z" fill="url(#bl)"/>
    <path d="M30 13c13-1 15 8 7 17-6 7-16 11-25 10 12-4 21-11 21-19 0-5-5-6-9-5z" fill="url(#gr)"/>
    <path d="M33 12C18 12 7 20 9 28c2 6 14 3 16-4-4 3-10 4-10 0 0-5 8-10 18-12z" fill="url(#bl)"/>
  </svg>
  <div><strong>极光下载站</strong><em>www.xz7.com</em></div>
</div>
</body>
</html>
```
FILE: styles.css
```css
:root {
  --ink: #242c3d;
  --line: #dfe2e8;
  --panel: #f5f7fa;
  --accent: #4a8df0;
  --doc: #808080;
}
* { box-sizing: border-box; }
body {
  margin: 0;
  height: 100vh;
  display: flex;
  flex-direction: column;
  overflow: hidden;
  position: relative;
  background: var(--panel);
  color: var(--ink);
  font: 12px/16px "Noto Sans", "Noto Sans CJK SC", sans-serif;
}
button {
  margin: 0; padding: 0; border: 0;
  background: none; color: inherit; font: inherit;
  display: flex; align-items: center; justify-content: center;
  white-space: nowrap;
}
a { color: inherit; text-decoration: none; white-space: nowrap; }
h1, h2, h3, p, dl, dd { margin: 0; font-weight: 400; }
svg { display: block; flex: none; overflow: visible; }
.defs { position: absolute; width: 0; height: 0; }
.i12 { width: 12px; height: 12px; }
.i14 { width: 14px; height: 14px; }
.i16 { width: 16px; height: 16px; }
.i24 { width: 24px; height: 24px; }
.ln { fill: none; stroke: #333c50; }
.caret { width: 6px; height: 4px; }
.up { transform: rotate(180deg); }
.vsep { flex: none; width: 1px; height: 20px; background: var(--line); }

/* title bar */
.titlebar { flex: none; height: 40px; display: flex; justify-content: space-between; background: #e1e3e8; }
.tabs { display: flex; align-items: flex-end; gap: 3px; padding-left: 2px; }
.tab {
  width: 243px; height: 30px; padding: 2px 10px 0 10px;
  display: flex; align-items: center; gap: 4px;
  background: #d8dadd; border-radius: 3px 3px 0 0; color: #3f4a60;
}
.tab span { flex: 1; }
.tab .last { margin-right: 20px; }
.tab.home { width: 69px; padding: 2px 0 0; justify-content: center; background: #628ffb; color: #fff; }
.tab.store { width: 125px; }
.tab.active { background: #fff; color: #111; }
.dot { width: 6px; height: 6px; margin: 0 2px 0 9px; border-radius: 3px; background: #e09a0c; }
.dot.pale { background: #b8c0d8; }
.plus { width: 30px; height: 30px; }
.win { flex: none; display: flex; align-items: center; gap: 13px; height: 40px; margin-right: -8px; }
.win .ln { stroke: #46536b; }
.login { width: 80px; height: 24px; gap: 4px; border-radius: 12px; background: #f5a60a; color: #fff; }
.win .vsep { margin: 0 0 0 -5px; background: #cfd2d8; }
.win .vsep ~ button { margin-right: 5px; }

/* menu bar */
.menubar { flex: none; height: 38px; padding-left: 15px; display: flex; align-items: center; background: #fff; }
.file { gap: 6px; margin-right: 9px; }
.quick { display: flex; align-items: center; gap: 9px; margin: 0 9px 0 9px; }
.quick button { gap: 5px; }
.quick button:last-child { margin: 0 0 0 3px; }
.redo { transform: scaleX(-1); opacity: .35; }
.menus { display: flex; gap: 26px; margin-left: 16px; padding-top: 2px; }
.menus .far { margin-left: 3px; }
.menus + .vsep { margin-left: 18px; }
.ctx { align-items: center; gap: 32px; margin-left: 23px; color: var(--accent); }
.pill { margin-left: -13px; padding: 2px 13px; border-radius: 10px; background: var(--accent); color: #fff; font-weight: 700; }
.search { flex: 1; display: flex; align-items: center; gap: 2px; margin-left: 18px; }
.search svg { fill: none; stroke: #8d97a8; }
.search input { width: 130px; border: 0; padding: 0; outline: 0; background: none; font: inherit; color: #5f6b80; }
.search input::placeholder { color: #77829a; opacity: 1; }
.cloud { display: flex; align-items: center; gap: 12px; margin-right: 4px; }
.cloud button { gap: 4px; }
.cloud .share { width: 60px; height: 24px; border-radius: 3px; background: var(--accent); color: #fff; }
.share svg { fill: none; stroke: #fff; }
.cloud .vsep { margin: 0 4px 0 3px; }
.cloud .vsep ~ button + button { margin-left: 4px; }

/* ribbon */
.ribbon { flex: none; height: 64px; display: flex; background: #fff; box-shadow: 0 1px 3px #c9ccd2; z-index: 1; }
.grp { flex: none; position: relative; display: flex; height: 62px; border-right: 1px solid #e8eaee; }
.big { flex-direction: column; justify-content: flex-start; gap: 5px; padding-top: 5px; }
.big > svg { height: 24px; }
.big span { display: flex; align-items: center; gap: 3px; line-height: 16px; }
.g-box { width: 69px; padding-left: 12px; }
.g-brush { width: 58px; padding-left: 10px; }
.rows { flex-direction: column; gap: 2px; padding: 2px 5px 0 5px; }
.paragraph { padding-left: 6px; }
.row { display: flex; align-items: center; height: 24px; }
.tb { width: 24px; height: 24px; }
.tb.c { width: 34px; justify-content: flex-start; padding-left: 4px; gap: 4px; }
.tb.on { background: #dde2e9; border-radius: 2px; }
.tb.bold { font-size: 19px; font-weight: 700; }
.tb.italic { margin-right: 2px; }
.tb.first { margin-left: 4px; }
.sep { flex: none; width: 1px; height: 18px; margin: 0 5px; background: var(--line); }
.format .sep { margin: 0 6px; }
.para .sep ~ .sep { margin: 0 6px; }
.align { gap: 2px; }
.align .sep { margin: 0 4px; }
.combo { display: flex; align-items: center; height: 23px; border: 1px solid var(--line); padding: 0 3px 0 2px; }
.combo select { flex: 1; min-width: 0; appearance: none; border: 0; padding: 0; background: none; color: inherit; font: inherit; }
.face { width: 97px; border-right: 0; gap: 2px; }
.size { width: 79px; }
.corner { position: absolute; right: 5px; bottom: 2px; width: 5px; height: 5px; border: solid #8a94a6; border-width: 0 1px 1px 0; }
.g-art { padding: 2px 0 0 5px; }
.g-art .big, .g-link .big { padding-top: 3px; }
.gallery { display: flex; align-items: center; width: 170px; height: 51px; border: 1px solid var(--line); border-radius: 2px; }
.art { width: 49px; height: 49px; padding-bottom: 5px; font: 700 34px/40px "Open Sans", sans-serif; }
.art.black { color: #000; text-shadow: 1px 1px 2px #999; }
.art.blue { color: #4472c4; text-shadow: 1px 1px 2px #999; }
.art.orange { color: #f8cbad; -webkit-text-stroke: 2px #ed7d31; }
.abc { width: 44px; height: 40px; margin: 0 4px; border: 1px solid #111; border-radius: 7px; font-size: 11px; color: #111; }
.abc.black { border-width: 2px; }
.abc.blue { border-color: #4472c4; }
.abc.orange { border-color: #ed7d31; }
.more { width: 12px; height: 49px; margin-left: auto; border-left: 1px solid #edeff2; }
.stack { display: flex; flex-direction: column; gap: 2px; margin: 0 9px 0 9px; }
.stack button { height: 24px; gap: 4px; }
.g-art .big { margin-right: 11px; }
.g-link { padding: 2px 8px 0 10px; }
.dim { opacity: .5; margin: 0 0 0 12px; }

/* work area */
.work { flex: 1; min-height: 0; display: flex; }
.rail { flex: none; width: 43px; padding: 2px 5px; display: flex; flex-direction: column; gap: 4px; border-right: 1px solid var(--line); }
.rail button { width: 32px; height: 32px; border-radius: 2px; }
.rail .on { background: #dbe0e7; }
.panel { flex: none; width: 243px; padding: 0 7px 13px 5px; display: flex; flex-direction: column; border-right: 1px solid var(--line); }
.phead { display: flex; align-items: center; justify-content: space-between; height: 30px; padding: 0 8px; }
.phead .ln { stroke: #70798a; }
.phead h1 { font-size: 19px; line-height: 30px; }
.ptools { display: flex; gap: 11px; height: 33px; padding: 5px 0 0 3px; align-items: flex-start; border-bottom: 1px solid var(--line); }
.ptools svg { fill: none; stroke: #606a7a; }
.sec { flex: none; height: 30px; padding: 2px 17px 0 8px; gap: 10px; }
.sec > svg:first-child { margin-left: 1px; }
.sec span { flex: 1; text-align: left; }
.sec.open { height: 38px; padding-top: 9px; gap: 8px; color: #3f7bf5; font-weight: 500; }
.sec.open > svg:first-child { margin-left: 0; }
.thumbs { flex: 1; min-height: 0; margin: 0 10px 0 8px; padding-top: 9px; border: 1px solid #eff1f5; border-top: 0; display: flex; flex-direction: column; align-items: center; gap: 1px; }
.thumb { flex: none; width: 134px; height: 189px; padding: 18px 15px 0 16px; border: 2px solid #8fb1f8; background: #fff; font-size: 3px; line-height: 4px; color: #555; }
.tm { display: flex; align-items: center; height: 7px; font-size: 3px; }
.tm span { width: 12px; }
.tm i { width: 15px; height: 5px; border-bottom: 1px dashed #000; }
.tm b { flex: 1; }
.tm b + span { width: 9px; }
.t1 { display: flex; justify-content: space-between; margin: 20px 0 0 16px; width: 68px; font-size: 6px; line-height: 10px; font-weight: 700; color: #000; }
.t2 { text-align: center; font-size: 6px; line-height: 8px; margin-top: 12px; font-weight: 700; color: #000; }
.t3 { width: 29px; margin: 21px 0 0 14px; }
.t3 p { display: flex; justify-content: space-between; height: 7px; line-height: 7px; }
.t4 { margin: 5px 0 0 38px; font-size: 4px; }
.t5 { margin-top: 24px; text-align: center; }
.tnum { line-height: 16px; font-size: 12px; }

.vruler { flex: none; width: 28px; padding: 12px 9px 1px 7px; display: flex; flex-direction: column; color: #4b566c; font: 10px/12px "Noto Sans", sans-serif; }
.tabkind { margin-bottom: 18px; }
.vruler div { flex: 1; display: flex; align-items: center; }
.vruler span { height: 18px; width: 12px; border: solid #8290ab; border-width: 1px 0; writing-mode: vertical-rl; transform: rotate(180deg); text-align: center; line-height: 10px; }
.zero i { flex: none; width: 16px; height: 12px; margin: 12px 0 0 -4px; border: solid #8290ab; border-width: 1px 0; background: #e6e9f0; }

.canvas { flex: 1; min-width: 0; display: grid; grid-template: 25px 1fr / 1fr 635px 1fr; }
.hruler { grid-column: 2; display: grid; grid-template-columns: repeat(24, minmax(0, 1fr)); padding: 0 13px 0 8px; text-align: center; font-size: 10px; line-height: 16px; color: #3d475e; }
.mark svg { margin-left: 8px; }
.tabstops { grid-area: 1 / 3; margin-left: -116px; padding-top: 12px; display: flex; gap: 211px; }
.gutter { grid-row: 2; }
.gutter.left { grid-column: 1; background: linear-gradient(to left, #dcdee1, #f5f7fa 15px); }
.gutter.right { grid-column: 3; padding: 20px 0 0 19px; background: linear-gradient(to right, #dcdee1, #f5f7fa 15px); }
.eject { width: 24px; height: 25px; background: #f7f7f7; border-radius: 2px; box-shadow: 0 0 4px #ccc; }
.check { margin-top: 8px; width: 100px; height: 32px; justify-content: flex-start; gap: 6px; background: #fff; border-radius: 3px; box-shadow: 0 1px 5px #ccc; color: #000; }
.check span { width: 31px; height: 32px; display: grid; place-items: center; background: #8a87fb; border-radius: 3px 0 0 3px; }
.check svg { fill: none; stroke: #fff; }

.page { grid-area: 2 / 2; display: flex; flex-direction: column; min-height: 0; position: relative; background: #fff; color: var(--doc); }
.pheader { flex: none; position: relative; height: 38px; padding: 6px 96px 0 95px; border-bottom: 1px dashed #bbb; }
.hbox { height: 31px; border: 1px dashed #bbb; border-bottom: 0; }
.tag { position: absolute; left: 12px; width: 100px; height: 27px; border: 1px dashed #bbb; background: #efefef; box-shadow: inset 0 0 0 1px #fff; text-align: center; line-height: 27px; color: var(--doc); z-index: 1; }
.pheader .tag { top: 100%; }
.pbody { flex: 1; min-height: 0; font-family: "Liberation Serif", "Noto Sans CJK SC", serif; }
.meta { display: flex; align-items: flex-end; height: 32px; padding: 0 74px 0 79px; font-size: 14px; line-height: 20px; color: #999; }
.k { width: 44px; display: flex; justify-content: space-between; }
.k b { width: 14px; font-weight: 300; }
.k.two { width: 37px; margin-left: auto; }
.meta u { width: 72px; height: 22px; margin-left: 13px; padding-left: 6px; border-bottom: 1px dashed #777; text-decoration: none; font-size: 12px; }
.meta .two + u { width: 73px; margin-left: 7px; }
.pbody h2 { margin-top: 112px; display: flex; justify-content: center; gap: 30px; font-size: 30px; line-height: 40px; }
.pbody h3 { margin-top: 70px; text-align: center; font-size: 27px; line-height: 32px; font-weight: 500; }
.pbody dl { margin: 102px 0 0 145px; display: grid; grid-template-columns: 135px 20px; font-size: 15px; line-height: 33px; }
.pbody dt { display: flex; justify-content: space-between; font-weight: 300; color: #666; }
.pbody dd { padding-left: 3px; }
.date { display: flex; align-items: center; margin: 24px 0 0 264px; font-size: 17px; line-height: 24px; font-weight: 300; }
.date small { font: 16px/24px "Liberation Sans", sans-serif; margin-right: 3px; }
.date span:last-child { margin-left: 18px; }
.pfooter { flex: none; position: relative; height: 62px; padding: 0 96px 0 95px; border-top: 1px dashed #bbb; color: #111; }
.pfooter .tag { bottom: 100%; }
.fbox { height: 24px; border: 1px dashed #bbb; border-top: 0; }
.fbar { position: absolute; left: 171px; bottom: 65px; display: flex; gap: 4px; }
.fbar button { width: 94px; height: 25px; gap: 4px; border: 1px solid #c4c6ca; background: #f7f7f7; }
.fbar .del { gap: 5px; border-color: #a3c0ee; background: #cbddf7; }
.g { fill: none; }
.pnum { position: absolute; left: 295px; top: -6px; width: 44px; }
.pnum span { position: absolute; left: 0; right: 0; top: 16px; text-align: center; font: 12px/14px "Liberation Serif", serif; }
.float { position: absolute; left: 345px; top: -156px; display: flex; flex-direction: column; gap: 12px; }
.float button { width: 28px; height: 27px; background: #fff; border: 1px solid #dcdcdc; box-shadow: 1px 1px 3px #ccc; }
.float .min { width: 18px; height: 18px; margin: 0 0 -4px 5px; border-color: #bbb; border-radius: 9px; box-shadow: none; }
.min::before { content: ""; width: 8px; height: 2px; background: #888; }
.menu { position: absolute; left: 367px; top: -158px; width: 115px; padding: 1px; background: #fff; border: 1px solid #c8cacd; box-shadow: 1px 1px 3px #ddd; }
.menu button { width: 100%; height: 25px; padding-left: 8px; justify-content: flex-start; }
.menu .hover { background: #e6eaf0; }
.arrows { position: absolute; left: 462px; top: -140px; filter: drop-shadow(2px 3px 2px #777); pointer-events: none; }

.scroll { flex: none; width: 14px; display: flex; flex-direction: column; align-items: center; padding-top: 4px; }
.track { flex: 1; width: 14px; padding: 8px 0; display: flex; flex-direction: column; align-items: center; gap: 11px; background: #e7e9ee; }
.thumbbar { flex: none; width: 12px; height: 52px; margin-top: 2px; border-radius: 6px; background: #d3d7df; }
.track b { flex: 1; }
.rrail { flex: none; width: 34px; padding: 10px 0 15px 2px; display: flex; flex-direction: column; align-items: flex-end; gap: 20px; border-left: 2px solid var(--line); }
.rrail .grip { width: 20px; height: 4px; margin-bottom: 2px; border: solid #c5c9d1; border-width: 1px 0; }
.rrail button { width: 22px; height: 16px; }
.rrail b { flex: 1; align-self: stretch; border-bottom: 1px solid var(--line); }
.rrail .dots { height: 6px; }

/* status bar */
.status { flex: none; height: 25px; padding: 5px 1px 0 9px; display: flex; align-items: center; border-top: 1px solid var(--line); white-space: nowrap; }
.status .vsep { height: 14px; }
.status > span { border-right: 1px solid var(--line); }
.s1 { width: 63px; }
.s2 { width: 54px; padding-left: 9px; }
.s3 { width: 50px; padding-left: 5px; }
.s4 { width: 73px; padding-left: 9px; }
.st { gap: 3px; margin: 0 9px 0 9px; }
.st.lit { height: 24px; margin: -2px 4px 0 1px; padding: 0 3px 0 4px; background: #e6effc; }
.status > .vsep { margin-left: 3px; }
.st.tight { margin: 0 4px 0 3px; }
.st.font { margin-left: 19px; }
.views { margin-left: auto; display: flex; align-items: center; gap: 3px; }
.vb { width: 23px; height: 22px; }
.vb.on { background: #d9dee6; }
.views .vsep { margin: 0 8px; }
.pct { gap: 6px; margin: 0 2px; }
.zb { width: 20px; height: 20px; }
.views input { appearance: none; width: 138px; height: 12px; margin: 0 4px; background: linear-gradient(90deg, #2b3448 38%, #d5d9e0 38%) center / 100% 1px no-repeat; }
.views input::-webkit-slider-thumb { appearance: none; width: 12px; height: 12px; border: 1px solid #333c50; border-radius: 6px; background: #f0f0f0; }

.brand { position: absolute; right: 11px; bottom: 7px; display: flex; align-items: center; opacity: .85; z-index: 3; pointer-events: none; }
.brand strong { display: block; font: 700 21px/27px "Noto Sans CJK SC", sans-serif; color: #4a90d0; }
.brand em { display: block; font: 700 15px/19px "Liberation Sans", sans-serif; color: #52b876; }
```
